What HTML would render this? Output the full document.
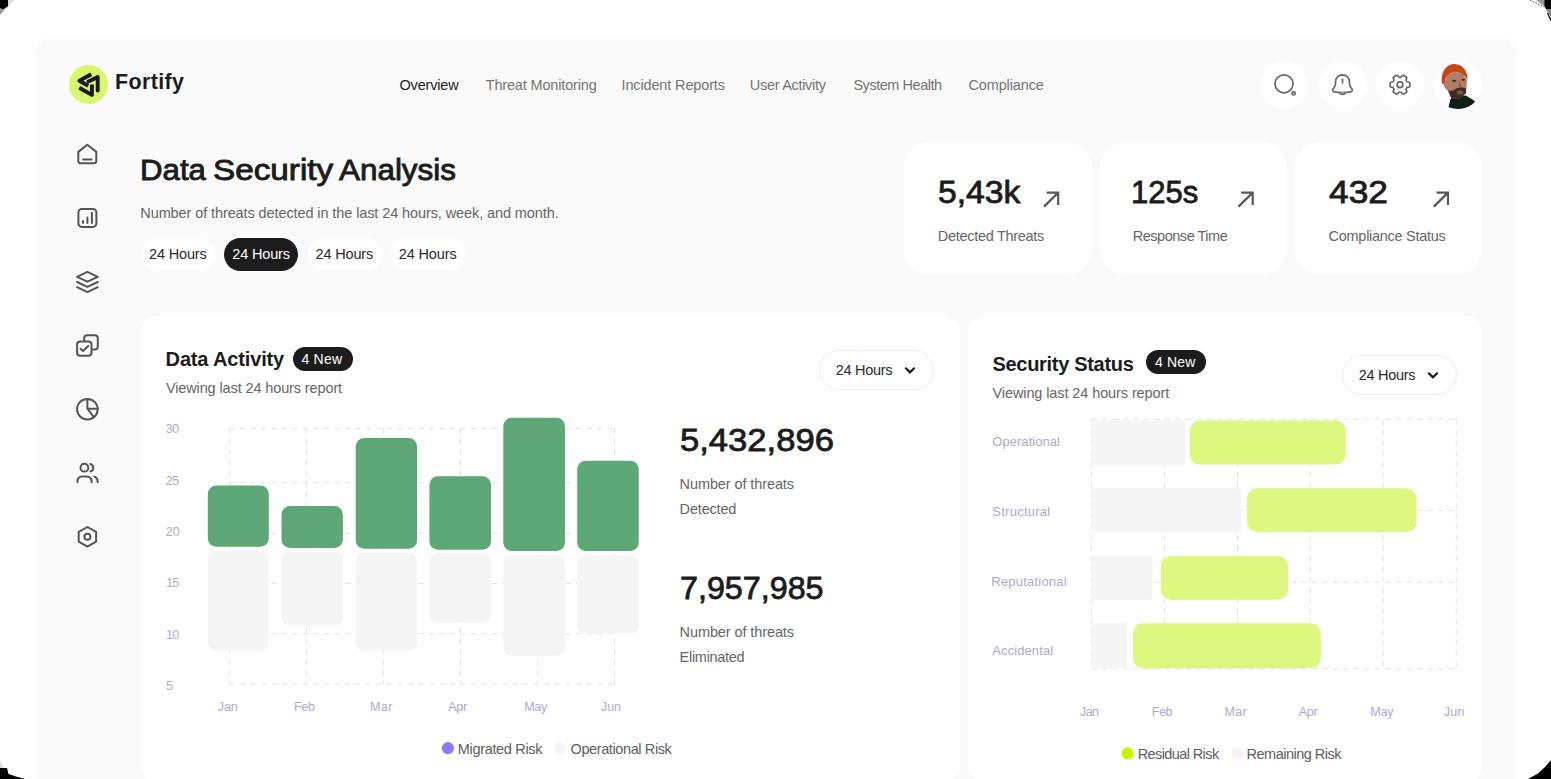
<!DOCTYPE html>
<html>
<head>
<meta charset="utf-8">
<title>Fortify</title>
<style>
*{box-sizing:border-box;margin:0;padding:0}
html,body{width:1551px;height:779px;overflow:hidden;background:#000}
body{font-family:"Liberation Sans",sans-serif;color:#1c1c1c;position:relative}
.outer{position:absolute;left:0;top:0;width:1551px;height:779px;background:#fff;overflow:hidden}
.panel{position:absolute;left:36px;top:36px;width:1480px;height:800px;background:#fafafa;border-radius:19px}
.t{position:absolute;white-space:nowrap;line-height:1;transform-origin:0 50%}
.card{position:absolute;background:#fff}
.nav{font-size:14.5px;color:#747474;top:77px}
.pill{position:absolute;top:238.1px;height:32.6px;width:74.2px;border-radius:17px;background:#fff;font-size:15px;line-height:33px;text-align:center;color:#2a2a2a}
.pill.on{background:#1c1c1c;color:#fff}
.ic{position:absolute;width:48px;height:48px;border-radius:50%;background:#fff;top:60.5px}
.sub{font-size:14.5px;color:#666}
.big{font-size:31px;color:#1c1c1c;-webkit-text-stroke:0.8px #1c1c1c}
.h2{font-size:20px;font-weight:bold;color:#1c1c1c}
.badge{position:absolute;height:24px;width:59px;border-radius:12px;background:#1c1c1c;color:#fff;font-size:15px;line-height:24px;text-align:center}
.dd{position:absolute;width:115.2px;height:39.4px;border-radius:20px;border:1px solid #ededed;background:#fff}
.ax{font-size:12.5px;color:#ababca}
.lg{font-size:14.5px;color:#606060}
svg{position:absolute;overflow:visible}
</style>
</head>
<body>
<div class="outer">
<div class="panel"></div>

<!-- logo -->
<div style="position:absolute;left:69px;top:65px;width:39px;height:39px;border-radius:50%;background:#d9f670"></div>
<span class="t" id="logo" style="left:115.0px;top:72.2px;letter-spacing:0.39px;font-size:21.4px;font-weight:bold;color:#1c1c1c">Fortify</span>

<!-- nav -->
<span class="t nav" id="n1" style="left:399.5px;top:77.5px;letter-spacing:-0.17px;color:#1c1c1c">Overview</span>
<span class="t nav" id="n2" style="left:485.7px;top:77.5px;letter-spacing:-0.16px;">Threat Monitoring</span>
<span class="t nav" id="n3" style="left:621.5px;top:77.5px;letter-spacing:-0.14px;">Incident Reports</span>
<span class="t nav" id="n4" style="left:749.8px;top:77.5px;letter-spacing:-0.30px;">User Activity</span>
<span class="t nav" id="n5" style="left:853.4px;top:77.5px;letter-spacing:-0.46px;">System Health</span>
<span class="t nav" id="n6" style="left:968.5px;top:77.5px;letter-spacing:-0.14px;">Compliance</span>

<!-- right icons -->
<div class="ic" style="left:1260px"></div>
<div class="ic" style="left:1319px"></div>
<div class="ic" style="left:1376px"></div>
<div class="ic" style="left:1434px"></div>

<!-- title -->
<span class="t" id="title1" style="left:139.9px;top:154.6px;letter-spacing:0.00px;font-size:30px;color:#1c1c1c;-webkit-text-stroke:0.9px #1c1c1c;transform:scaleX(1.041)">Data</span><span class="t" id="title2" style="left:212.6px;top:154.6px;letter-spacing:0.00px;font-size:30px;color:#1c1c1c;-webkit-text-stroke:0.9px #1c1c1c;transform:scaleX(1.109)">Security</span><span class="t" id="title3" style="left:339.2px;top:154.6px;letter-spacing:0.00px;font-size:30px;color:#1c1c1c;-webkit-text-stroke:0.9px #1c1c1c;transform:scaleX(1.047)">Analysis</span>
<span class="t sub" id="subtitle" style="left:140.3px;top:206.1px;letter-spacing:-0.10px;">Number of threats detected in the last 24 hours, week, and month.</span>

<div class="pill" style="left:141px"></div>
<div class="pill on" style="left:224.2px"></div>
<div class="pill" style="left:307.5px"></div>
<div class="pill" style="left:390.7px"></div>

<!-- stat cards -->
<div class="card" style="left:904px;top:142px;width:188px;height:133px;border-radius:26px"></div>
<div class="card" style="left:1100px;top:142px;width:187px;height:133px;border-radius:26px"></div>
<div class="card" style="left:1295px;top:142px;width:187px;height:133px;border-radius:26px"></div>
<span class="t big" id="s1" style="left:937.7px;top:176.7px;letter-spacing:0.00px;;transform:scaleX(1.086)">5,43k</span>
<span class="t big" id="s2" style="left:1131.3px;top:176.7px;letter-spacing:0.00px;;transform:scaleX(1.001)">125s</span>
<span class="t big" id="s3" style="left:1328.6px;top:176.7px;letter-spacing:0.00px;;transform:scaleX(1.139)">432</span>
<span class="t sub" id="s1l" style="left:937.8px;top:228.6px;letter-spacing:-0.30px;">Detected Threats</span>
<span class="t sub" id="s2l" style="left:1132.7px;top:228.6px;letter-spacing:-0.47px;">Response Time</span>
<span class="t sub" id="s3l" style="left:1328.6px;top:228.6px;letter-spacing:-0.28px;">Compliance Status</span>

<!-- Data Activity card -->
<div class="card" style="left:140.5px;top:316px;width:819.5px;height:464px;border-radius:16px 16px 13px 13px"></div>
<span class="t h2" id="da" style="left:165.6px;top:349.2px;letter-spacing:-0.15px;">Data Activity</span>
<div class="badge" style="left:293px;top:346.6px;width:59.6px;height:24.4px"></div>
<span class="t sub" id="dasub" style="left:165.9px;top:380.9px;letter-spacing:-0.12px;">Viewing last 24 hours report</span>
<div class="dd" style="left:819px;top:350.3px"></div>
<span class="t" id="dd1" style="left:835.7px;top:363.3px;letter-spacing:-0.28px;font-size:14.5px;color:#2a2a2a">24 Hours</span>

<span class="t big" id="b1" style="left:679.9px;top:425.2px;letter-spacing:0.00px;font-size:31px;transform:scaleX(1.116)">5,432,896</span>
<span class="t sub" id="b1a" style="left:679.6px;top:477.1px;letter-spacing:-0.10px;">Number of threats</span>
<span class="t sub" id="b1b" style="left:679.6px;top:501.5px;letter-spacing:-0.17px;">Detected</span>
<span class="t big" id="b2" style="left:679.6px;top:573.2px;letter-spacing:0.00px;font-size:31px;transform:scaleX(1.041)">7,957,985</span>
<span class="t sub" id="b2a" style="left:679.6px;top:625.1px;letter-spacing:-0.10px;">Number of threats</span>
<span class="t sub" id="b2b" style="left:679.6px;top:649.5px;letter-spacing:-0.29px;">Eliminated</span>

<!-- Security Status card -->
<div class="card" style="left:968px;top:316px;width:513.5px;height:464px;border-radius:16px 16px 13px 13px"></div>
<span class="t h2" id="ss" style="left:992.5px;top:354.1px;letter-spacing:-0.31px;">Security Status</span>
<div class="badge" style="left:1146px;top:349.7px;width:60px;height:24.7px"></div>
<span class="t sub" id="sssub" style="left:992.5px;top:385.7px;letter-spacing:-0.10px;">Viewing last 24 hours report</span>
<div class="dd" style="left:1342px;top:355.3px"></div>
<span class="t" id="dd2" style="left:1358.7px;top:368.3px;letter-spacing:-0.28px;font-size:14.5px;color:#2a2a2a">24 Hours</span>

<svg id="gfx" width="1551" height="779" viewBox="0 0 1551 779" style="left:0;top:0">
<g stroke="#e0e0e0" stroke-width="1" stroke-dasharray="5.5 5" fill="none">
<path d="M229.3 428.4V684"/>
<path d="M306.4 428.4V684"/>
<path d="M383.4 428.4V684"/>
<path d="M460.5 428.4V684"/>
<path d="M537.6 428.4V684"/>
<path d="M614.5 428.4V684"/>
<path d="M229.3 428.4H614.5"/>
<path d="M229.3 482.8H614.5"/>
<path d="M229.3 533.3H614.5"/>
<path d="M229.3 583.4H614.5"/>
<path d="M229.3 633.7H614.5"/>
<path d="M229.3 684.0H614.5"/>
</g>
<rect x="207.8" y="550.8" width="61.0" height="99.8" rx="8" fill="#f5f5f5"/>
<rect x="281.5" y="551.8" width="61.4" height="73.9" rx="8" fill="#f5f5f5"/>
<rect x="355.7" y="552.8" width="61.4" height="97.7" rx="8" fill="#f5f5f5"/>
<rect x="429.4" y="553.5" width="61.6" height="69.0" rx="8" fill="#f5f5f5"/>
<rect x="503.3" y="555.2" width="61.7" height="100.5" rx="8" fill="#f5f5f5"/>
<rect x="577.2" y="555.2" width="61.6" height="78.3" rx="8" fill="#f5f5f5"/>
<rect x="207.8" y="485.4" width="61.0" height="61.3" rx="8.5" fill="#5ea776"/>
<rect x="281.5" y="506.1" width="61.4" height="41.9" rx="8.5" fill="#5ea776"/>
<rect x="355.7" y="438.0" width="61.4" height="110.8" rx="8.5" fill="#5ea776"/>
<rect x="429.4" y="476.2" width="61.6" height="73.6" rx="8.5" fill="#5ea776"/>
<rect x="503.3" y="417.7" width="61.7" height="133.2" rx="8.5" fill="#5ea776"/>
<rect x="577.2" y="460.8" width="61.6" height="90.1" rx="8.5" fill="#5ea776"/>
<circle cx="447.9" cy="748.2" r="6.1" fill="#8a7af6"/><circle cx="559.9" cy="748.2" r="6.1" fill="#f5f5f5"/>
<circle cx="1127.6" cy="753.4" r="6.1" fill="#c9f505"/><circle cx="1237.3" cy="753.4" r="6.1" fill="#f5f5f5"/>
<g stroke="#e0e0e0" stroke-width="1" stroke-dasharray="5.5 5" fill="none">
<path d="M1091.3 419.3V668.7"/>
<path d="M1164.4 419.3V668.7"/>
<path d="M1237.5 419.3V668.7"/>
<path d="M1310.2 419.3V668.7"/>
<path d="M1383.1 419.3V668.7"/>
<path d="M1456.3 419.3V668.7"/>
<path d="M1091.3 419.3H1456.3"/>
<path d="M1091.3 510.4H1456.3"/>
<path d="M1091.3 582.1H1456.3"/>
<path d="M1091.3 668.7H1456.3"/>
</g>
<path d="M1091.3 420.6H1183.5a2 2 0 0 1 2 2V462.4a2 2 0 0 1 -2 2H1091.3Z" fill="#f5f5f5"/>
<rect x="1189.8" y="420.6" width="156.0" height="43.8" rx="10" fill="#ddf781"/>
<path d="M1091.3 488.2H1239.0a2 2 0 0 1 2 2V530.2a2 2 0 0 1 -2 2H1091.3Z" fill="#f5f5f5"/>
<rect x="1247.0" y="488.2" width="169.5" height="44.0" rx="10" fill="#ddf781"/>
<path d="M1091.3 556.0H1150.5a2 2 0 0 1 2 2V597.8a2 2 0 0 1 -2 2H1091.3Z" fill="#f5f5f5"/>
<rect x="1160.9" y="556.0" width="127.1" height="43.8" rx="10" fill="#ddf781"/>
<path d="M1091.3 623.3H1125.0a2 2 0 0 1 2 2V666.2a2 2 0 0 1 -2 2H1091.3Z" fill="#f5f5f5"/>
<rect x="1133.0" y="623.3" width="187.8" height="44.9" rx="10" fill="#ddf781"/>
<path d="M1044.0 206.6L1058.2 192.6M1046.7 192.6H1058.2V205" fill="none" stroke="#585858" stroke-width="2.2" stroke-linejoin="miter"/>
<path d="M1238.5 206.6L1252.7 192.6M1241.2 192.6H1252.7V205" fill="none" stroke="#585858" stroke-width="2.2" stroke-linejoin="miter"/>
<path d="M1433.8 206.6L1448.0 192.6M1436.5 192.6H1448.0V205" fill="none" stroke="#585858" stroke-width="2.2" stroke-linejoin="miter"/>
<path d="M905.9 368.3l4.1 4.1 4.1-4.1" fill="none" stroke="#1c1c1c" stroke-width="2.2" stroke-linecap="round" stroke-linejoin="round"/>
<path d="M1428.9 373.3l4.1 4.1 4.1-4.1" fill="none" stroke="#1c1c1c" stroke-width="2.2" stroke-linecap="round" stroke-linejoin="round"/>
<g fill="none" stroke="#1b1b26" stroke-width="3.9" stroke-linejoin="round"><path d="M91.2 74.2L79.4 80.8L88.2 85.9"/><path d="M88.4 81.6L97.7 77.1V90.6" stroke-linecap="round"/><path d="M79.2 87.8L91.9 94.9L92 84.6"/></g>
<g fill="none" stroke="#686868" stroke-width="1.7" stroke-linecap="round" stroke-linejoin="round">
<circle cx="1284" cy="83.8" r="9"/><circle cx="1293.6" cy="93.4" r="1.6"/>
<path d="M1342.500 74.800a7 7 0 0 0 -7 7v2c0 1.500-.500 2.800-1.500 4l-.900 1.100c-1 1.300-.300 2.700 1.200 2.900c2.700.500 5.400.700 8.200.700s5.500-.200 8.200-.700c1.500-.200 2.200-1.600 1.200-2.900l-.900-1.100c-1-1.200-1.500-2.500-1.500-4V81.800a7 7 0 0 0 -7-7z"/><path d="M1342.500 79.300v3.600"/><path d="M1339.600 92.600c.500 1.400 1.600 1.900 2.900 1.900s2.400-.600 2.900-1.900" fill="#c4c4c4"/>
<path d="M1407.10 82.00L1408.30 82.00A1.6 1.6 0 0 1 1409.90 83.60L1409.90 85.80A1.6 1.6 0 0 1 1408.30 87.40L1407.10 87.40A4.2 4.2 0 0 0 1405.89 89.50L1406.49 90.54A1.6 1.6 0 0 1 1405.90 92.72L1404.00 93.82A1.6 1.6 0 0 1 1401.81 93.24L1401.21 92.20A4.2 4.2 0 0 0 1398.79 92.20L1398.19 93.24A1.6 1.6 0 0 1 1396.00 93.82L1394.10 92.72A1.6 1.6 0 0 1 1393.51 90.54L1394.11 89.50A4.2 4.2 0 0 0 1392.90 87.40L1391.70 87.40A1.6 1.6 0 0 1 1390.10 85.80L1390.10 83.60A1.6 1.6 0 0 1 1391.70 82.00L1392.90 82.00A4.2 4.2 0 0 0 1394.11 79.90L1393.51 78.86A1.6 1.6 0 0 1 1394.10 76.68L1396.00 75.58A1.6 1.6 0 0 1 1398.19 76.16L1398.79 77.20A4.2 4.2 0 0 0 1401.21 77.20L1401.81 76.16A1.6 1.6 0 0 1 1404.00 75.58L1405.90 76.68A1.6 1.6 0 0 1 1406.49 78.86L1405.89 79.90A4.2 4.2 0 0 0 1407.10 82.00Z"/><circle cx="1400" cy="84.7" r="2.9"/>
</g>
<defs><clipPath id="avc"><circle cx="1458" cy="85" r="24"/></clipPath></defs>
<g clip-path="url(#avc)"><path d="M1448 109L1450.4 99.2L1454 97L1466 95.500L1468.500 97C1471 98.500 1473.500 100 1475 101.500L1476 112H1446Z" fill="#0d1f18"/><path d="M1444 82C1443.500 84 1443.800 86.500 1445.500 88.500L1447.500 90.500L1451.200 98.500L1460 98.500L1466.200 92.500L1467 80.500L1463 74L1455 72L1449 74.500Z" fill="#b27d66"/><path d="M1448.300 90C1451 91.500 1453 91 1455.500 89C1458 87.300 1462.500 87 1466 88.500L1466 93L1461 98.500L1451.500 99Z" fill="#3b2e27"/><path d="M1456.500 91.500C1458.500 90.300 1461.500 90.300 1463.500 91.300L1463 94.500H1457.500Z" fill="#7a5445"/><ellipse cx="1454.200" cy="80.800" rx="2" ry="1" fill="#3a2a26"/><ellipse cx="1463.300" cy="79.800" rx="1.800" ry="1" fill="#3a2a26"/><path d="M1459.500 81L1458 86.500L1461.500 86.800Z" fill="#8f5f4c"/><path d="M1442.100 83.800C1441.500 81 1441.500 79 1441.800 77C1442.300 73.500 1443.200 71.500 1444.500 69.500C1447 66 1450 64.300 1453.500 64C1456.500 63.800 1459.500 64.800 1462 66.500C1464.500 68.500 1466.200 71.500 1466.900 74.200C1467.500 76.500 1467.500 78.500 1467.200 80.400C1466.500 78 1465 76 1463.500 75C1461 73.300 1458.500 72.300 1455.800 72.300C1453.500 72.300 1451.500 73 1449.600 74.200C1447.800 75.500 1446.300 77.500 1445.400 79.600C1444.700 81.200 1444.200 82.800 1443.500 84.200Z" fill="#c4481a"/></g>
<g fill="none" stroke="#555" stroke-width="2" stroke-linecap="round" stroke-linejoin="round">
<path d="M78.300 151.900L87.300 144.800L96.300 151.900V160.900a2.300 2.300 0 0 1 -2.300 2.300H80.600a2.300 2.300 0 0 1 -2.300-2.300Z"/><path d="M83.200 159.600H91.600"/>
<rect x="78.400" y="208.900" width="18" height="18" rx="3.400"/><path d="M83 221V223M87.400 217.400V223M91.900 212.800V223"/>
<path d="M87.400 271.900L97.800 276.800L87.400 281.700L77 276.800Z"/><path d="M77 282L87.400 286.900L97.800 282"/><path d="M77 287.200L87.400 292.100L97.800 287.200"/>
<rect x="77.100" y="341.600" width="14.400" height="14.100" rx="3"/><path d="M84.200 341V338.300a3 3 0 0 1 3-3H94.800a3 3 0 0 1 3 3V346.400a3 3 0 0 1 -3 3H92.200"/><path d="M80.600 348.800L83 351L88.300 346"/>
<circle cx="87.400" cy="409.200" r="10.300"/><path d="M87.400 399V408.700H97.600M87.400 408.700L93.300 416.500"/>
<circle cx="84.400" cy="467.700" r="3.900"/><path d="M77.400 482.300V481a4.600 4.600 0 0 1 4.600-4.600H87a4.600 4.600 0 0 1 4.600 4.600V482.300"/><path d="M90.400 464a3.900 3.900 0 0 1 0 7.500"/><path d="M94.300 476.600a4.600 4.600 0 0 1 3.300 4.400V482.300"/>
<path d="M87.400 527L96.100 531.900V541.700L87.400 546.600L78.700 541.700V531.900Z"/><circle cx="87.400" cy="536.800" r="3"/>
</g>
<path d="M0 0H8.200V6.300L3.500 9.300L0 8.500Z" fill="#000"/><path d="M0 8.500L3.500 9.300L6.500 7.500L0 15Z" fill="#999"/><path d="M8.200 0H15L8.200 5.500Z" fill="#ddd"/><path d="M1551 0H1544.200V6L1546 9H1551Z" fill="#000"/><path d="M1536 0H1544.200V6Z" fill="#999"/><path d="M1545.500 9H1551V17Z" fill="#888"/><path d="M1547.500 13L1551 20.500" stroke="#000" stroke-width="1.200"/><path d="M1530 0L1544 7" stroke="#000" stroke-width="0.800" stroke-dasharray="1.500 1.500"/><path d="M0 779V768H7L8.500 774L16 776.500L25 779Z" fill="#000"/><path d="M0 760V768H3.500Z" fill="#ddd"/><path d="M1551 779V760L1545 767L1538 773.500L1528 779Z" fill="#000"/></svg>
<span class="t" id="p1" style="left:149.0px;top:247.1px;letter-spacing:-0.16px;font-size:14.5px;color:#2a2a2a">24 Hours</span>
<span class="t" id="p2" style="left:232.3px;top:247.1px;letter-spacing:-0.16px;font-size:14.5px;color:#fff">24 Hours</span>
<span class="t" id="p3" style="left:315.5px;top:247.1px;letter-spacing:-0.16px;font-size:14.5px;color:#2a2a2a">24 Hours</span>
<span class="t" id="p4" style="left:398.8px;top:247.1px;letter-spacing:-0.14px;font-size:14.5px;color:#2a2a2a">24 Hours</span>
<span class="t" id="bd1" style="left:301.4px;top:352.1px;letter-spacing:0.26px;font-size:14px;color:#fff">4 New</span>
<span class="t" id="bd2" style="left:1155.0px;top:355.4px;letter-spacing:0.18px;font-size:14px;color:#fff">4 New</span>
<span class="t ax" id="y30" style="left:165.7px;top:423.3px;letter-spacing:-0.35px;">30</span>
<span class="t ax" id="y25" style="left:165.7px;top:474.5px;letter-spacing:-0.35px;">25</span>
<span class="t ax" id="y20" style="left:165.7px;top:525.8px;letter-spacing:0.15px;">20</span>
<span class="t ax" id="y15" style="left:165.9px;top:577.2px;letter-spacing:-0.60px;">15</span>
<span class="t ax" id="y10" style="left:165.9px;top:628.6px;letter-spacing:-0.60px;">10</span>
<span class="t ax" id="y5" style="left:165.9px;top:679.6px;letter-spacing:-0.60px;">5</span>
<span class="t ax" id="xa1" style="left:217.8px;top:700.8px;letter-spacing:-0.15px;">Jan</span>
<span class="t ax" id="xa2" style="left:293.9px;top:700.8px;letter-spacing:-0.19px;">Feb</span>
<span class="t ax" id="xa3" style="left:370.1px;top:700.8px;letter-spacing:0.37px;">Mar</span>
<span class="t ax" id="xa4" style="left:448.2px;top:700.8px;letter-spacing:-0.29px;">Apr</span>
<span class="t ax" id="xa5" style="left:524.3px;top:700.8px;letter-spacing:-0.38px;">May</span>
<span class="t ax" id="xa6" style="left:601.0px;top:700.8px;letter-spacing:-0.05px;">Jun</span>
<span class="t lg" id="lg1" style="left:457.8px;top:741.8px;letter-spacing:-0.33px;">Migrated Risk</span>
<span class="t lg" id="lg2" style="left:570.5px;top:741.8px;letter-spacing:-0.39px;">Operational Risk</span>
<span class="t ax" id="r1" style="left:992.3px;top:435.3px;letter-spacing:0.04px;font-size:13px">Operational</span>
<span class="t ax" id="r2" style="left:992.3px;top:504.6px;letter-spacing:0.25px;font-size:13px">Structural</span>
<span class="t ax" id="r3" style="left:991.3px;top:574.5px;letter-spacing:0.21px;font-size:13px">Reputational</span>
<span class="t ax" id="r4" style="left:992.3px;top:644.2px;letter-spacing:0.09px;font-size:13px">Accidental</span>
<span class="t ax" id="xb1" style="left:1080.0px;top:705.6px;letter-spacing:-0.55px;">Jan</span>
<span class="t ax" id="xb2" style="left:1151.7px;top:705.6px;letter-spacing:-0.34px;">Feb</span>
<span class="t ax" id="xb3" style="left:1224.4px;top:705.6px;letter-spacing:0.42px;">Mar</span>
<span class="t ax" id="xb4" style="left:1298.7px;top:705.6px;letter-spacing:-0.29px;">Apr</span>
<span class="t ax" id="xb5" style="left:1370.3px;top:705.6px;letter-spacing:-0.18px;">May</span>
<span class="t ax" id="xb6" style="left:1444.0px;top:705.6px;letter-spacing:0.10px;">Jun</span>
<span class="t lg" id="lg3" style="left:1137.7px;top:746.7px;letter-spacing:-0.60px;">Residual Risk</span>
<span class="t lg" id="lg4" style="left:1246.6px;top:746.7px;letter-spacing:-0.51px;">Remaining Risk</span>

</div>
</body>
</html>
